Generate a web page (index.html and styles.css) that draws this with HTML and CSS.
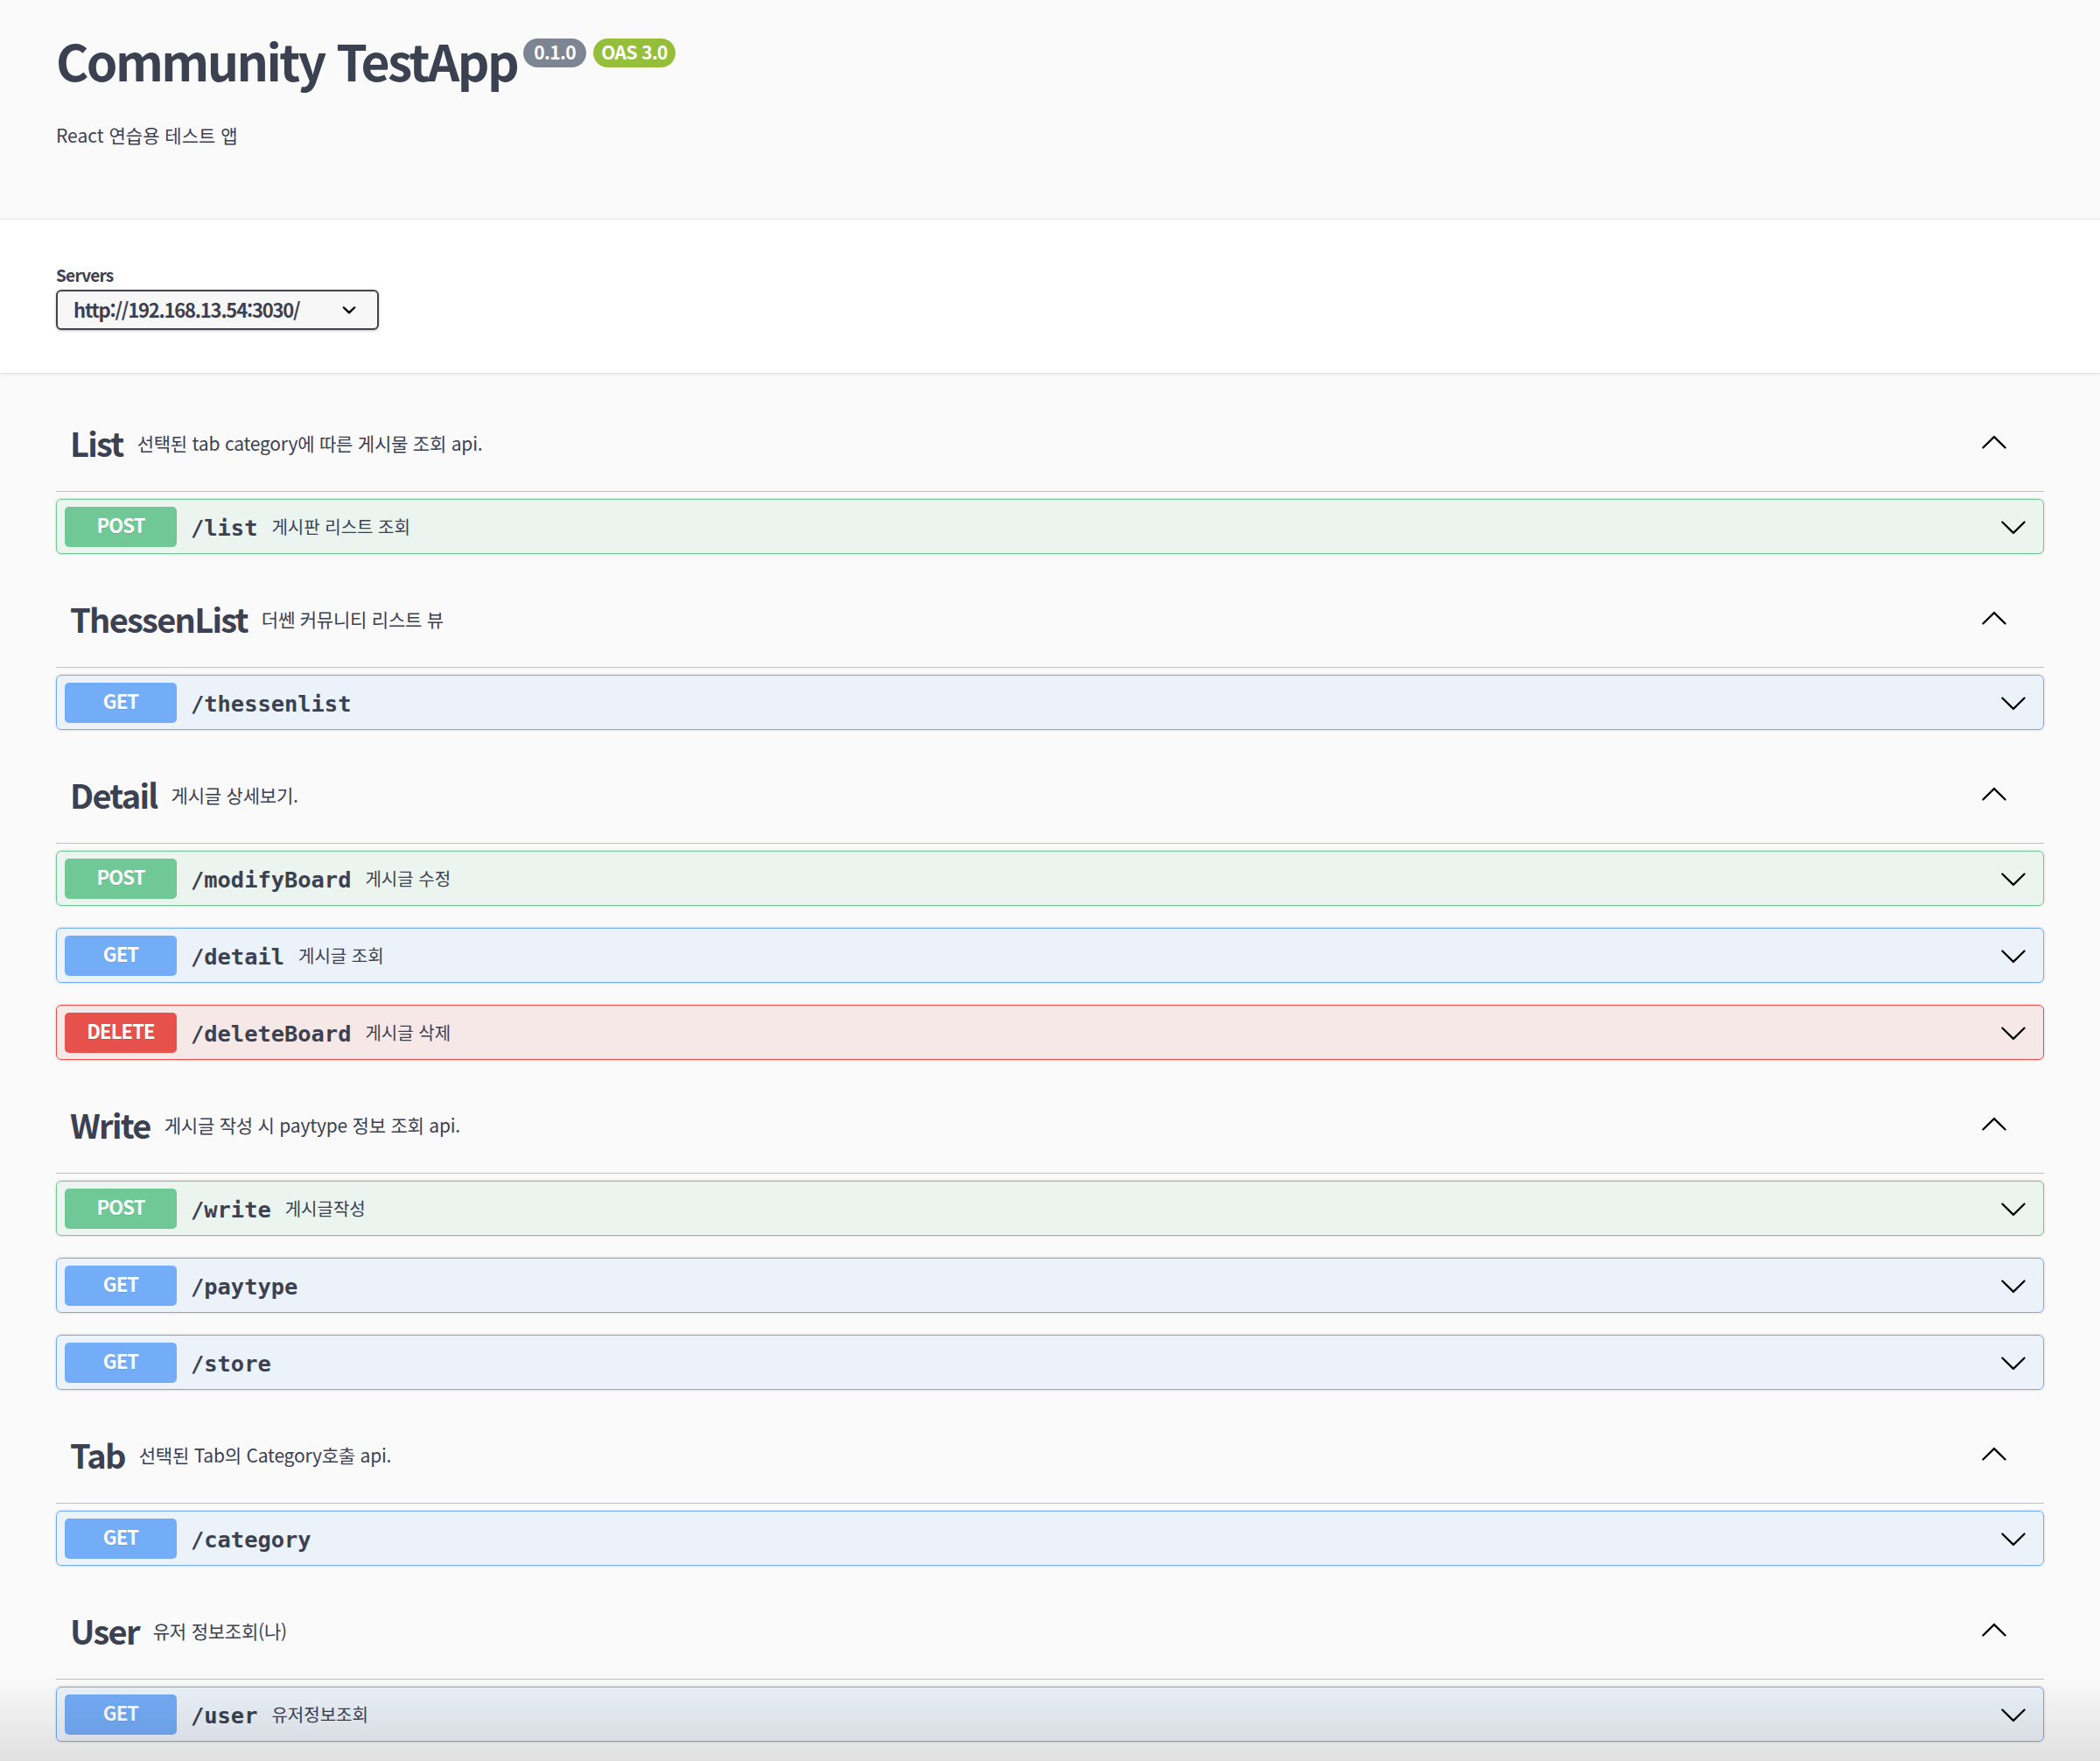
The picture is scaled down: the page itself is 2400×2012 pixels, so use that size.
FILE: index.html
```html
<!DOCTYPE html>
<html lang="ko">
<head>
<meta charset="utf-8">
<title>Community TestApp</title>
<link rel="stylesheet" href="styles.css">
</head>
<body>
<div class="info-bar">
  <div class="title-row">
    <h1 class="title">Community TestApp</h1>
    <span class="badge badge-ver">0.1.0</span>
    <span class="badge badge-oas">OAS 3.0</span>
  </div>
  <p class="info-desc">React 연습용 테스트 앱</p>
</div>

<div class="scheme">
  <div class="servers-label">Servers</div>
  <div class="select">
    <span class="select-text">http://192.168.13.54:3030/</span>
    <svg class="select-arrow" viewBox="0 0 20 20"><path d="M13.418 7.859a.695.695 0 01.978 0 .68.68 0 010 .969l-3.908 3.830a.697.697 0 01-.979 0l-3.908-3.830a.68.68 0 010-.969.695.695 0 01.978 0L10 11l3.418-3.141z"/></svg>
  </div>
</div>

<div class="ops">
  <section class="tag-section">
    <div class="tag"><h3 class="tag-name">List</h3><small class="tag-desc">선택된 tab category에 따른 게시물 조회 api.</small><svg class="arrow up" viewBox="0 0 20 20"><path d="M17.418 6.109c.272-.268.709-.268.979 0s.271.701 0 .969l-7.908 7.83c-.27.268-.707.268-.979 0l-7.908-7.83c-.27-.268-.27-.701 0-.969.271-.268.709-.268.979 0L10 13.25l7.418-7.141z"/></svg></div>
    <div class="op op-post"><span class="method">POST</span><span class="path">/list</span><span class="op-desc">게시판 리스트 조회</span><svg class="arrow" viewBox="0 0 20 20"><path d="M17.418 6.109c.272-.268.709-.268.979 0s.271.701 0 .969l-7.908 7.83c-.27.268-.707.268-.979 0l-7.908-7.83c-.27-.268-.27-.701 0-.969.271-.268.709-.268.979 0L10 13.25l7.418-7.141z"/></svg></div>
  </section>

  <section class="tag-section">
    <div class="tag"><h3 class="tag-name">ThessenList</h3><small class="tag-desc">더쎈 커뮤니티 리스트 뷰</small><svg class="arrow up" viewBox="0 0 20 20"><path d="M17.418 6.109c.272-.268.709-.268.979 0s.271.701 0 .969l-7.908 7.83c-.27.268-.707.268-.979 0l-7.908-7.83c-.27-.268-.27-.701 0-.969.271-.268.709-.268.979 0L10 13.25l7.418-7.141z"/></svg></div>
    <div class="op op-get"><span class="method">GET</span><span class="path">/thessenlist</span><span class="op-desc"></span><svg class="arrow" viewBox="0 0 20 20"><path d="M17.418 6.109c.272-.268.709-.268.979 0s.271.701 0 .969l-7.908 7.83c-.27.268-.707.268-.979 0l-7.908-7.83c-.27-.268-.27-.701 0-.969.271-.268.709-.268.979 0L10 13.25l7.418-7.141z"/></svg></div>
  </section>

  <section class="tag-section">
    <div class="tag"><h3 class="tag-name">Detail</h3><small class="tag-desc">게시글 상세보기.</small><svg class="arrow up" viewBox="0 0 20 20"><path d="M17.418 6.109c.272-.268.709-.268.979 0s.271.701 0 .969l-7.908 7.83c-.27.268-.707.268-.979 0l-7.908-7.83c-.27-.268-.27-.701 0-.969.271-.268.709-.268.979 0L10 13.25l7.418-7.141z"/></svg></div>
    <div class="op op-post"><span class="method">POST</span><span class="path">/modifyBoard</span><span class="op-desc">게시글 수정</span><svg class="arrow" viewBox="0 0 20 20"><path d="M17.418 6.109c.272-.268.709-.268.979 0s.271.701 0 .969l-7.908 7.83c-.27.268-.707.268-.979 0l-7.908-7.83c-.27-.268-.27-.701 0-.969.271-.268.709-.268.979 0L10 13.25l7.418-7.141z"/></svg></div>
    <div class="op op-get"><span class="method">GET</span><span class="path">/detail</span><span class="op-desc">게시글 조회</span><svg class="arrow" viewBox="0 0 20 20"><path d="M17.418 6.109c.272-.268.709-.268.979 0s.271.701 0 .969l-7.908 7.83c-.27.268-.707.268-.979 0l-7.908-7.83c-.27-.268-.27-.701 0-.969.271-.268.709-.268.979 0L10 13.25l7.418-7.141z"/></svg></div>
    <div class="op op-delete"><span class="method">DELETE</span><span class="path">/deleteBoard</span><span class="op-desc">게시글 삭제</span><svg class="arrow" viewBox="0 0 20 20"><path d="M17.418 6.109c.272-.268.709-.268.979 0s.271.701 0 .969l-7.908 7.83c-.27.268-.707.268-.979 0l-7.908-7.83c-.27-.268-.27-.701 0-.969.271-.268.709-.268.979 0L10 13.25l7.418-7.141z"/></svg></div>
  </section>

  <section class="tag-section">
    <div class="tag"><h3 class="tag-name">Write</h3><small class="tag-desc">게시글 작성 시 paytype 정보 조회 api.</small><svg class="arrow up" viewBox="0 0 20 20"><path d="M17.418 6.109c.272-.268.709-.268.979 0s.271.701 0 .969l-7.908 7.83c-.27.268-.707.268-.979 0l-7.908-7.83c-.27-.268-.27-.701 0-.969.271-.268.709-.268.979 0L10 13.25l7.418-7.141z"/></svg></div>
    <div class="op op-post"><span class="method">POST</span><span class="path">/write</span><span class="op-desc">게시글작성</span><svg class="arrow" viewBox="0 0 20 20"><path d="M17.418 6.109c.272-.268.709-.268.979 0s.271.701 0 .969l-7.908 7.83c-.27.268-.707.268-.979 0l-7.908-7.83c-.27-.268-.27-.701 0-.969.271-.268.709-.268.979 0L10 13.25l7.418-7.141z"/></svg></div>
    <div class="op op-get"><span class="method">GET</span><span class="path">/paytype</span><span class="op-desc"></span><svg class="arrow" viewBox="0 0 20 20"><path d="M17.418 6.109c.272-.268.709-.268.979 0s.271.701 0 .969l-7.908 7.83c-.27.268-.707.268-.979 0l-7.908-7.83c-.27-.268-.27-.701 0-.969.271-.268.709-.268.979 0L10 13.25l7.418-7.141z"/></svg></div>
    <div class="op op-get"><span class="method">GET</span><span class="path">/store</span><span class="op-desc"></span><svg class="arrow" viewBox="0 0 20 20"><path d="M17.418 6.109c.272-.268.709-.268.979 0s.271.701 0 .969l-7.908 7.83c-.27.268-.707.268-.979 0l-7.908-7.83c-.27-.268-.27-.701 0-.969.271-.268.709-.268.979 0L10 13.25l7.418-7.141z"/></svg></div>
  </section>

  <section class="tag-section">
    <div class="tag"><h3 class="tag-name">Tab</h3><small class="tag-desc">선택된 Tab의 Category호출 api.</small><svg class="arrow up" viewBox="0 0 20 20"><path d="M17.418 6.109c.272-.268.709-.268.979 0s.271.701 0 .969l-7.908 7.83c-.27.268-.707.268-.979 0l-7.908-7.83c-.27-.268-.27-.701 0-.969.271-.268.709-.268.979 0L10 13.25l7.418-7.141z"/></svg></div>
    <div class="op op-get"><span class="method">GET</span><span class="path">/category</span><span class="op-desc"></span><svg class="arrow" viewBox="0 0 20 20"><path d="M17.418 6.109c.272-.268.709-.268.979 0s.271.701 0 .969l-7.908 7.83c-.27.268-.707.268-.979 0l-7.908-7.83c-.27-.268-.27-.701 0-.969.271-.268.709-.268.979 0L10 13.25l7.418-7.141z"/></svg></div>
  </section>

  <section class="tag-section">
    <div class="tag"><h3 class="tag-name">User</h3><small class="tag-desc">유저 정보조회(나)</small><svg class="arrow up" viewBox="0 0 20 20"><path d="M17.418 6.109c.272-.268.709-.268.979 0s.271.701 0 .969l-7.908 7.83c-.27.268-.707.268-.979 0l-7.908-7.83c-.27-.268-.27-.701 0-.969.271-.268.709-.268.979 0L10 13.25l7.418-7.141z"/></svg></div>
    <div class="op op-get"><span class="method">GET</span><span class="path">/user</span><span class="op-desc">유저정보조회</span><svg class="arrow" viewBox="0 0 20 20"><path d="M17.418 6.109c.272-.268.709-.268.979 0s.271.701 0 .969l-7.908 7.83c-.27.268-.707.268-.979 0l-7.908-7.83c-.27-.268-.27-.701 0-.969.271-.268.709-.268.979 0L10 13.25l7.418-7.141z"/></svg></div>
  </section>
</div>
<div class="bottom-fade"></div>
</body>
</html>
```

FILE: styles.css
```css
html, body {
  margin: 0;
  padding: 0;
}
body {
  background: #fafafa;
  color: #3b4151;
  font-family: "Noto Sans CJK KR", "Noto Sans", sans-serif;
  height: 2012px;
  overflow: hidden;
}

/* ---------- info ---------- */
.info-bar {
  background: #fafafa;
  height: 251px;
  box-sizing: border-box;
  padding: 40px 64px 0;
  border-bottom: 1px solid #f1f1f1;
}
.title-row {
  display: flex;
  align-items: flex-start;
}
.title {
  margin: 0;
  font-size: 57px;
  line-height: 57px;
  font-weight: 700;
  letter-spacing: -0.045em;
  color: #3b4151;
}
.badge {
  margin-top: 4px;
  height: 33px;
  line-height: 31px;
  border-radius: 57px;
  color: #fff;
  font-size: 21px;
  font-weight: 700;
  letter-spacing: -0.03em;
  padding: 0 8px;
  box-sizing: border-box;
  text-align: center;
}
.badge-ver {
  background: #7d8492;
  margin-left: 7px;
  min-width: 72px;
}
.badge-oas {
  background: #95bf3a;
  margin-left: 8px;
  min-width: 94px;
}
.info-desc {
  margin: 42px 0 0;
  font-size: 21px;
  line-height: 30px;
}

/* ---------- servers ---------- */
.scheme {
  background: #fff;
  height: 175px;
  box-sizing: border-box;
  padding: 52px 64px 0;
  box-shadow: 0 1px 3px 0 rgba(0, 0, 0, 0.15);
  position: relative;
}
.servers-label {
  font-size: 19px;
  font-weight: 700;
  line-height: 22px;
  letter-spacing: -0.04em;
}
.select {
  margin-top: 6px;
  width: 369px;
  height: 46px;
  box-sizing: border-box;
  border: 2px solid #41444e;
  border-radius: 6px;
  background: #f7f7f7;
  box-shadow: 0 1px 3px 0 rgba(0, 0, 0, 0.25);
  display: flex;
  align-items: center;
  padding: 0 16px 3px 18px;
}
.select-text {
  flex: 1;
  font-size: 22px;
  font-weight: 700;
  letter-spacing: -1.2px;
  color: #3b4151;
}
.select-arrow {
  width: 32px;
  height: 32px;
  fill: #000;
  margin-top: 3px;
}

/* ---------- operations ---------- */
.ops {
  padding: 31px 64px 0;
}
.tag {
  height: 105px;
  box-sizing: border-box;
  border-bottom: 1px solid rgba(59, 65, 81, 0.3);
  display: flex;
  align-items: center;
  padding: 0 41px 6px 16px;
  margin-bottom: 8px;
}
.tag-name {
  margin: 0;
  font-size: 38px;
  line-height: 1;
  font-weight: 700;
  letter-spacing: -0.045em;
}
.tag-desc {
  flex: 1;
  font-size: 21px;
  padding-left: 16px;
  font-weight: 400;
  letter-spacing: -0.01em;
}
.arrow {
  width: 32px;
  height: 32px;
  fill: #000;
  flex: none;
}
.arrow.up {
  transform: rotate(180deg);
}

.op {
  height: 63px;
  box-sizing: border-box;
  border: 1px solid;
  border-radius: 6px;
  box-shadow: 0 0 3px rgba(0, 0, 0, 0.19);
  display: flex;
  align-items: center;
  padding: 0 18px 0 9px;
  margin-bottom: 25px;
}
.method {
  width: 128px;
  height: 46px;
  box-sizing: border-box;
  padding-bottom: 5px;
  border-radius: 5px;
  display: flex;
  align-items: center;
  justify-content: center;
  color: #fff;
  font-size: 22px;
  font-weight: 700;
  letter-spacing: -0.04em;
  text-shadow: 0 1px 0 rgba(0, 0, 0, 0.1);
  flex: none;
}
.path {
  font-family: "DejaVu Sans Mono", monospace;
  font-size: 25.4px;
  font-weight: 700;
  padding: 0 16px;
  color: #3b4151;
  margin-top: 2px;
}
.op-desc {
  flex: 1;
  font-size: 20px;
  color: #3b4151;
}

.op-post {
  border-color: #6fc895;
  background: rgba(111, 200, 149, 0.1);
}
.op-post .method { background: #6fc895; }

.op-get {
  border-color: #74adf7;
  background: rgba(116, 173, 247, 0.1);
}
.op-get .method { background: #74adf7; }

.op-delete {
  border-color: #e6524b;
  background: rgba(230, 82, 75, 0.1);
}
.op-delete .method { background: #e6524b; }

.bottom-fade {
  position: fixed;
  left: 0;
  right: 0;
  bottom: 0;
  height: 100px;
  background: linear-gradient(to bottom, rgba(0, 0, 0, 0), rgba(0, 0, 0, 0.1));
  pointer-events: none;
}
```
